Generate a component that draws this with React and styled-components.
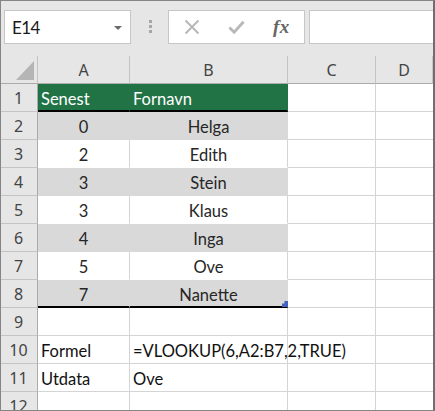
import React from 'react';
import styled, { createGlobalStyle } from 'styled-components';

const GRID = '#d4d4d4';
const HEAD_LINE = '#c4c4c4';
const GREEN = '#217346';
const BAND = '#d9d9d9';

const ROWS = [
	{ a: '0', b: 'Helga' },
	{ a: '2', b: 'Edith' },
	{ a: '3', b: 'Stein' },
	{ a: '3', b: 'Klaus' },
	{ a: '4', b: 'Inga' },
	{ a: '5', b: 'Ove' },
	{ a: '7', b: 'Nanette' },
];

const EXTRA = [
	{ a: '', b: '' },
	{ a: 'Formel', b: '=VLOOKUP(6,A2:B7,2,TRUE)' },
	{ a: 'Utdata', b: 'Ove' },
	{ a: '', b: '' },
];

const App = () => {
	return (
		<>
			<GlobalStyle />
			<Frame>
				<FormulaBar>
					<NameBox>
						<span>E14</span>
						<DropArrow />
					</NameBox>
					<Grip>
						<i />
						<i />
						<i />
					</Grip>
					<ButtonBox>
						<IconSlot>
							<svg width="16" height="16" viewBox="0 0 16 16">
								<path d="M1.5 1.5 L14.5 14.5 M14.5 1.5 L1.5 14.5" stroke="#b8b8b8" strokeWidth="2" fill="none" />
							</svg>
						</IconSlot>
						<IconSlot>
							<svg width="18" height="16" viewBox="0 0 18 16">
								<path d="M1.5 8.5 L6.5 13.5 L16.5 2.5" stroke="#b8b8b8" strokeWidth="3" fill="none" />
							</svg>
						</IconSlot>
						<Fx>fx</Fx>
					</ButtonBox>
					<FormulaInput />
				</FormulaBar>

				<Sheet>
					<Corner>
						<CornerTriangle />
					</Corner>
					{['A', 'B', 'C', 'D'].map((col) => (
						<ColHead key={col}>{col}</ColHead>
					))}

					<RowHead>1</RowHead>
					<TableHeadCell>Senest</TableHeadCell>
					<TableHeadCell>Fornavn</TableHeadCell>
					<Cell />
					<Cell $end />

					{ROWS.map((row, i) => {
						const banded = i % 2 === 0;
						const lastRow = i === ROWS.length - 1;
						return (
							<React.Fragment key={i}>
								<RowHead>{i + 2}</RowHead>
								<BodyCell $banded={banded} $thick={lastRow}>{row.a}</BodyCell>
								<BodyCell $banded={banded} $thick={lastRow}>
									{row.b}
									{lastRow && <FillHandle />}
								</BodyCell>
								<Cell />
								<Cell $end />
							</React.Fragment>
						);
					})}

					{EXTRA.map((row, i) => (
						<React.Fragment key={'x' + i}>
							<RowHead>{i + 9}</RowHead>
							<Cell>{row.a}</Cell>
							<Cell>{row.b}</Cell>
							<Cell />
							<Cell $end />
						</React.Fragment>
					))}
				</Sheet>
			</Frame>
		</>
	);
};

const GlobalStyle = createGlobalStyle`
	html, body {
		margin: 0;
		padding: 0;
		background: #ffffff;
	}
	* {
		box-sizing: border-box;
	}
`;

const Frame = styled.div`
	width: 435px;
	height: 411px;
	overflow: hidden;
	display: flex;
	flex-direction: column;
	background: #e6e6e6;
	border: 1px solid #858585;
	border-right: 2px solid #6f6f6f;
`;

const FormulaBar = styled.div`
	height: 55px;
	flex-shrink: 0;
	display: flex;
	align-items: flex-start;
	padding: 9px 0 0 3px;
`;

const NameBox = styled.div`
	width: 127px;
	height: 34px;
	background: #ffffff;
	border: 1px solid #c6c6c6;
	display: flex;
	align-items: center;
	justify-content: space-between;
	padding: 1px 8px 0 7px;
	font-family: 'Lato', sans-serif;
	font-size: 17px;
	letter-spacing: -0.6px;
	color: #1a1a1a;
`;

const DropArrow = styled.span`
	width: 0;
	height: 0;
	border-left: 4px solid transparent;
	border-right: 4px solid transparent;
	border-top: 4px solid #6a6a6a;
	margin-top: 1px;
`;

const Grip = styled.div`
	margin-left: 18px;
	margin-top: 10px;
	display: flex;
	flex-direction: column;
	gap: 2px;

	i {
		display: block;
		width: 3px;
		height: 3px;
		background: #a6a6a6;
	}
`;

const ButtonBox = styled.div`
	margin-left: 16px;
	width: 137px;
	height: 34px;
	background: #ffffff;
	border: 1px solid #c6c6c6;
	display: flex;
	align-items: center;
	padding-left: 14px;
	gap: 28px;
`;

const IconSlot = styled.span`
	display: flex;
	align-items: center;
	justify-content: center;
	width: 17px;
	height: 18px;
`;

const Fx = styled.span`
	font-family: 'Liberation Serif', serif;
	font-style: italic;
	font-weight: bold;
	font-size: 19px;
	color: #666666;
	letter-spacing: 0.5px;
`;

const FormulaInput = styled.div`
	margin-left: 4px;
	flex: 1;
	height: 34px;
	margin-right: -6px;
	background: #ffffff;
	border: 1px solid #c6c6c6;
`;

const Sheet = styled.div`
	display: grid;
	grid-template-columns: 37px 92px 158px 88px 57px;
	grid-auto-rows: 28px;
	background: #ffffff;
`;

const Corner = styled.div`
	background: #e6e6e6;
	border-right: 1px solid ${HEAD_LINE};
	border-bottom: 1px solid #ababab;
	display: flex;
	align-items: flex-end;
	justify-content: flex-end;
	padding: 0 3px 3px 0;
`;

const CornerTriangle = styled.span`
	width: 18px;
	height: 19px;
	background: #b5b5b5;
	clip-path: polygon(100% 0, 100% 100%, 0 100%);
`;

const HeadBase = styled.div`
	background: #e6e6e6;
	font-family: 'Noto Sans', sans-serif;
	font-size: 16px;
	color: #444444;
	display: flex;
	align-items: center;
	justify-content: center;
`;

const ColHead = styled(HeadBase)`
	border-right: 1px solid ${HEAD_LINE};
	border-bottom: 1px solid #ababab;
	padding-top: 1px;

	&:last-of-type {
		border-right: none;
	}
`;

const RowHead = styled(HeadBase)`
	border-right: 1px solid #ababab;
	border-bottom: 1px solid ${HEAD_LINE};
	padding-right: 1px;
`;

const Cell = styled.div`
	position: relative;
	font-family: 'Lato', sans-serif;
	font-size: 16.5px;
	color: #111111;
	white-space: nowrap;
	display: flex;
	align-items: center;
	padding: 3px 0 0 3px;
	border-right: ${(p) => (p.$end ? 'none' : `1px solid ${GRID}`)};
	border-bottom: 1px solid ${GRID};
`;

const TableHeadCell = styled(Cell)`
	background: ${GREEN};
	color: #ffffff;
	border-right-color: ${GREEN};
	border-bottom: 2px solid #000000;
	padding-top: 4px;
`;

const BodyCell = styled(Cell)`
	justify-content: center;
	padding-left: 0;
	color: #262626;
	background: ${(p) => (p.$banded ? BAND : '#ffffff')};
	border-right-color: ${(p) => (p.$banded ? BAND : GRID)};
	border-bottom: ${(p) =>
		p.$thick ? '2px solid #000000' : `1px solid ${p.$banded ? BAND : '#ffffff'}`};
`;

const FillHandle = styled.span`
	position: absolute;
	right: -1px;
	bottom: -1px;
	width: 6px;
	height: 6px;
	background: #4562bd;
	clip-path: polygon(40% 0, 100% 0, 100% 100%, 0 100%, 0 40%, 40% 40%);
`;

export default App;
